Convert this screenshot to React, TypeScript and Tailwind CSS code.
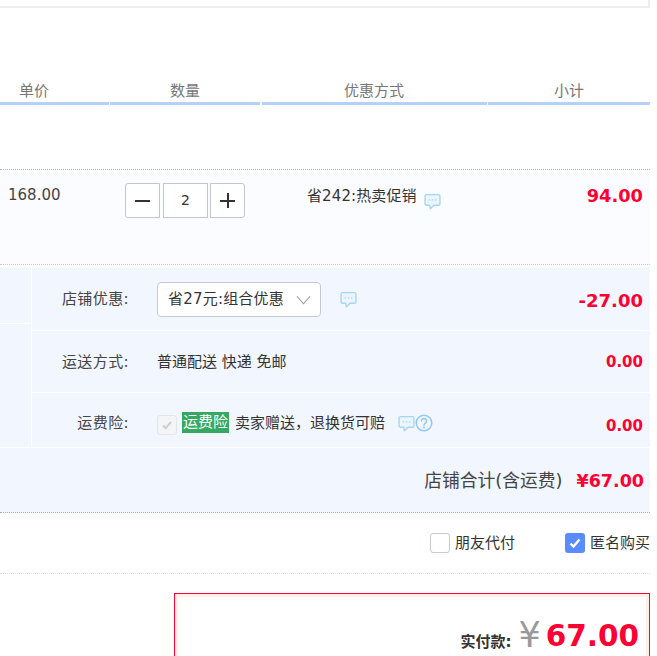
import { ReactNode } from 'react';

const Bubble = ({ className }: { className: string }) => (
    <svg viewBox="0 0 16 16" className={className} fill="none">
        <path d="M2.500 1.500h11a1.500 1.500 0 0 1 1.500 1.500v7a1.500 1.500 0 0 1-1.500 1.500H9.500L6 14.800 5.300 11.500H2.500A1.500 1.500 0 0 1 1 10V3a1.500 1.500 0 0 1 1.500-1.500z" fill="#eaf5fd" stroke="#a5d6f5" strokeWidth="1.300" strokeLinejoin="round" />
        <circle cx="5" cy="6.500" r=".8" fill="#b5dcf6" />
        <circle cx="8" cy="6.500" r=".8" fill="#b5dcf6" />
        <circle cx="11" cy="6.500" r=".8" fill="#b5dcf6" />
    </svg>
);

const Help = () => (
    <svg viewBox="0 0 18 18" className="w-[18px] h-[18px]" fill="none">
        <circle cx="9" cy="9" r="7.800" stroke="#8fc8f0" strokeWidth="1.500" />
        <path d="M6.500 7a2.500 2.500 0 1 1 3.800 2.100c-.9.6-1.300 1-1.300 2.100" stroke="#8fc8f0" strokeWidth="1.500" strokeLinecap="round" />
        <circle cx="9" cy="13.500" r="1" fill="#8fc8f0" />
    </svg>
);

const Check = ({ color }: { color: string }) => (
    <svg viewBox="0 0 20 20" className="w-full h-full" fill="none">
        <path d="M5.500 10.500l3 3 6-7" stroke={color} strokeWidth="2.400" />
    </svg>
);

const ShopRow = ({ label, height, amount, amountClass, children }: { label: string; height: string; amount: string; amountClass: string; children: ReactNode }) => (
    <div className={`flex items-center border-b border-white ${height}`}>
        <div className="w-[97px] text-right text-[#444] shrink-0 whitespace-nowrap tracking-[0.4px]">{label}</div>
        <div className="flex items-center flex-1 ml-[28px]">{children}</div>
        <div className={`font-bold text-[#ff0033] pr-[7px] ${amountClass}`}>{amount}</div>
    </div>
);

const App = () => {
    return (
        <div className="w-[657px] h-[656px] overflow-hidden bg-white text-[#333] text-[15px] font-['DejaVu_Sans','Noto_Sans_CJK_SC',sans-serif]">
            <div className="w-[650px] overflow-hidden">
                <div className="h-[8px] border-b-2 border-r-2 border-[#eeeeee]"></div>

                <div className="flex h-[97px] gap-[1px] items-end text-[#777]">
                    <div className="w-[109px] h-full flex flex-col justify-end">
                        <div className="pl-[19px]">单价</div>
                        <div className="h-[3px] bg-[#b2d1fb]"></div>
                    </div>
                    <div className="w-[150px] h-full flex flex-col justify-end">
                        <div className="pl-[60px]">数量</div>
                        <div className="h-[3px] bg-[#b2d1fb]"></div>
                    </div>
                    <div className="w-[225px] ml-[1px] h-full flex flex-col justify-end">
                        <div className="pl-[82px]">优惠方式</div>
                        <div className="h-[3px] bg-[#b2d1fb]"></div>
                    </div>
                    <div className="flex-1 h-full flex flex-col justify-end">
                        <div className="pl-[66px]">小计</div>
                        <div className="h-[3px] bg-[#b2d1fb]"></div>
                    </div>
                </div>

                <div className="mt-[64px] h-[96px] border-y border-dotted border-t-[#9fb6d9] border-b-[#cccccc] bg-[#fbfcff] flex items-start">
                    <div className="w-[125px] pl-[8px] pt-[14px] text-[#444]">168.00</div>
                    <div className="w-[182px] pt-[13px] flex">
                        <button className="w-[35px] h-[35px] bg-white border border-[#c5c5d0] rounded-l-[3px] flex items-center justify-center">
                            <span className="w-[15px] h-[2px] bg-[#333]"></span>
                        </button>
                        <div className="w-[45px] h-[35px] ml-[3px] bg-white border border-[#c5c5d0] flex items-center justify-center text-[14px]">2</div>
                        <button className="w-[35px] h-[35px] ml-[2px] bg-white border border-[#c5c5d0] rounded-r-[3px] flex items-center justify-center relative">
                            <span className="w-[15px] h-[2px] bg-[#333]"></span>
                            <span className="absolute w-[2px] h-[15px] bg-[#333]"></span>
                        </button>
                    </div>
                    <div className="flex-1 pt-[15px] flex items-start">
                        <span className="whitespace-nowrap tracking-[0.1px]">省242:热卖促销</span>
                        <Bubble className="w-[17px] h-[17px] ml-[7px] mt-[8px]" />
                    </div>
                    <div className="pr-[7px] pt-[13px] font-bold text-[#ff0033] text-[17.8px]">94.00</div>
                </div>

                <div className="mt-[2px] bg-[#f2f6ff]">
                    <div className="flex">
                        <div className="w-[32px] border-r border-b border-white shrink-0">
                            <div className="h-[57px] border-b border-white"></div>
                        </div>
                        <div className="flex-1">
                            <ShopRow label="店铺优惠:" height="h-[64px] pt-[2px]" amount="-27.00" amountClass="text-[18px] mt-[2px]">
                                <div className="w-[164px] h-[35px] bg-white border border-[#c8c8d2] rounded-[4px] flex items-center justify-between pl-[10px] pr-[9px]">
                                    <span className="whitespace-nowrap tracking-[0.2px]">省27元:组合优惠</span>
                                    <svg viewBox="0 0 16 10" className="w-[15px] h-[10px] shrink-0" fill="none">
                                        <path d="M1 1l7 8 7-8" stroke="#999" strokeWidth="1.200" />
                                    </svg>
                                </div>
                                <Bubble className="w-[17px] h-[17px] ml-[19px]" />
                            </ShopRow>
                            <ShopRow label="运送方式:" height="h-[62px] pt-[2px]" amount="0.00" amountClass="text-[15px]">
                                <span className="whitespace-nowrap">普通配送 快递 免邮</span>
                            </ShopRow>
                            <ShopRow label="运费险:" height="h-[55px] pt-[6px]" amount="0.00" amountClass="text-[15px] mt-[7px]">
                                <div className="w-[20px] h-[20px] bg-[#f4f5f7] border border-[#e4e4ea] rounded-[3px] mt-[3px] shrink-0">
                                    <Check color="#cfcfcf" />
                                </div>
                                <span className="ml-[5px] -mt-[2px] h-[21px] w-[47px] leading-[21px] text-center bg-[#36a862] text-white whitespace-nowrap">运费险</span>
                                <span className="ml-[6px] whitespace-nowrap">{'卖家赠送\uFF0C退换货可赔'}</span>
                                <Bubble className="w-[17px] h-[17px] ml-[13px]" />
                                <Help />
                            </ShopRow>
                        </div>
                    </div>
                    <div className="h-[65px] pt-[2px] flex items-center justify-end pr-[6px] border-b border-dotted border-[#8fb2e8]">
                        <span className="text-[17.8px] text-[#444] whitespace-nowrap">店铺合计(含运费)</span>
                        <span className="ml-[14px] font-bold text-[#ff0033] text-[17.5px]">¥67.00</span>
                    </div>
                </div>

                <div className="h-[61px] flex items-center justify-end border-b border-dotted border-[#dddddd]">
                    <div className="w-[20px] h-[20px] bg-white border border-[#c8c8d8] rounded-[3px] shrink-0"></div>
                    <span className="ml-[5px] whitespace-nowrap">朋友代付</span>
                    <div className="w-[20px] h-[20px] ml-[50px] bg-[#5b8cff] rounded-[3px] shrink-0">
                        <Check color="#ffffff" />
                    </div>
                    <span className="ml-[5px] whitespace-nowrap">匿名购买</span>
                </div>

                <div className="ml-[174px] mt-[19px] h-[100px] border border-[#ff0033]">
                    <div className="h-full border-[3px] border-[#fff0e8] bg-white flex items-start justify-end pr-[7px] pt-[20px]">
                        <span className="font-bold text-[15px] mt-[14px] whitespace-nowrap">实付款:</span>
                        <span className="text-[#999] text-[35px] leading-[36px] ml-[7px]">¥</span>
                        <span className="ml-[5px] mt-[1px] font-bold text-[#ff0033] text-[29.5px] leading-[36px]">67.00</span>
                    </div>
                </div>
            </div>
        </div>
    );
};

export default App;
